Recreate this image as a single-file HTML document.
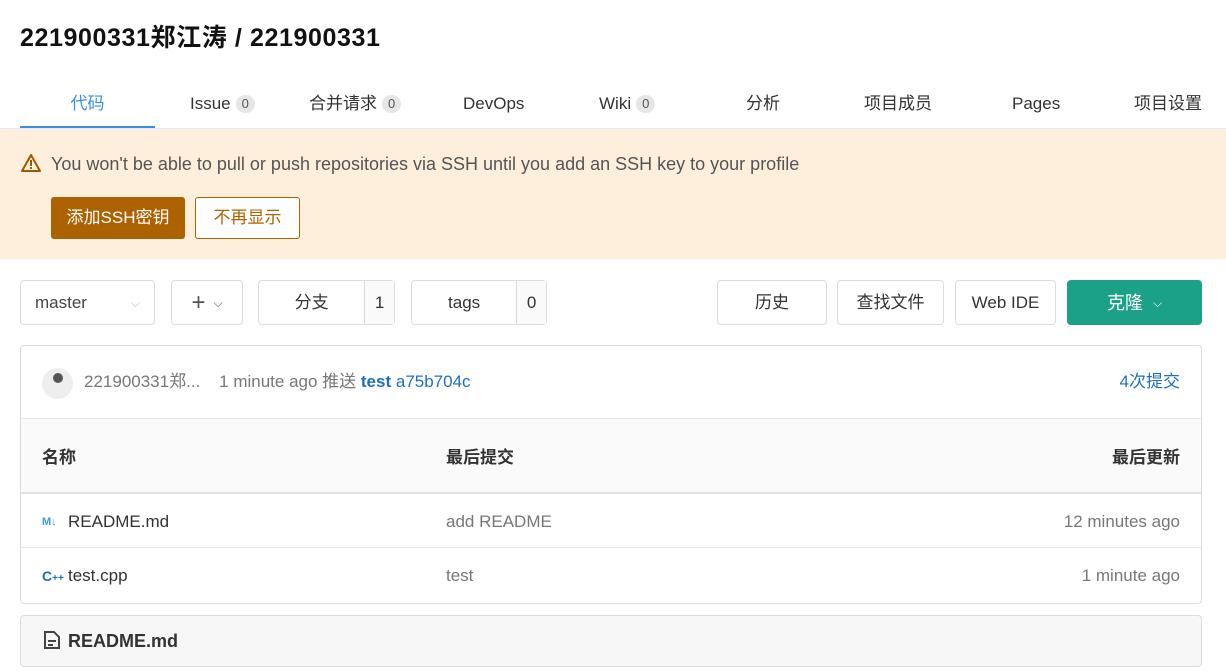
<!DOCTYPE html>
<html><head><meta charset="utf-8"><style>
*{box-sizing:border-box;margin:0;padding:0}
body{width:1226px;height:672px;overflow:hidden;background:#fff;font-family:"Liberation Sans","Noto Sans CJK SC",sans-serif;color:#333;font-size:16px;position:relative}
.a{position:absolute}
.t{white-space:nowrap;line-height:22px;height:22px}
.btn{position:absolute;border:1px solid #dcdcdc;border-radius:4px;background:#fff;display:flex;align-items:center;justify-content:center;font-size:17px;color:#333;line-height:22px}
.btn span{line-height:22px}
.badge{display:inline-block;background:#e6e6e6;border-radius:9px;font-size:13px;line-height:18px;padding:0 6px;color:#555;margin-left:5px;vertical-align:1px}
</style></head><body>
<div class="a t" style="left:20px;top:25px;font-size:25px;line-height:26px;height:26px;font-weight:bold;color:#111;letter-spacing:0.6px">221900331郑江涛 / 221900331</div>
<div class="a" style="left:0;top:76px;width:1226px;height:53px;border-bottom:1px solid #e6e6e6;box-shadow:0 2px 3px rgba(0,0,0,.06)"></div>
<div class="a t" style="left:20px;top:93px;width:135px;text-align:center;font-size:17px;color:#3a8ee6">代码</div>
<div class="a" style="left:20px;top:126px;width:135px;height:2px;background:#3a8ee6"></div>
<div class="a t" style="left:190px;top:93px;font-size:17px">Issue<span class="badge">0</span></div>
<div class="a t" style="left:309px;top:93px;font-size:17px">合并请求<span class="badge">0</span></div>
<div class="a t" style="left:463px;top:93px;font-size:17px">DevOps</div>
<div class="a t" style="left:599px;top:93px;font-size:17px">Wiki<span class="badge">0</span></div>
<div class="a t" style="left:746px;top:93px;font-size:17px">分析</div>
<div class="a t" style="left:864px;top:93px;font-size:17px">项目成员</div>
<div class="a t" style="left:1012px;top:93px;font-size:17px">Pages</div>
<div class="a t" style="left:1134px;top:93px;font-size:17px">项目设置</div>
<div class="a" style="left:0;top:130px;width:1226px;height:129px;background:#fdefdc"></div>
<svg class="a" style="left:20px;top:153px" width="22" height="20" viewBox="0 0 22 20"><path d="M11 2L20 18H2Z" fill="none" stroke="#9c5a00" stroke-width="2" stroke-linejoin="round"/><rect x="10" y="7" width="2" height="6" fill="#9c5a00"/><rect x="10" y="14" width="2" height="2" fill="#9c5a00"/></svg>
<div class="a t" style="left:51px;top:153px;font-size:18px;color:#555">You won't be able to pull or push repositories via SSH until you add an SSH key to your profile</div>
<div class="a" style="left:51px;top:197px;width:134px;height:42px;background:#ad6200;border-radius:3px;color:#fff;font-size:17px;display:flex;align-items:center;justify-content:center;line-height:22px">添加SSH密钥</div>
<div class="a" style="left:195px;top:197px;width:105px;height:42px;background:#fff;border:1px solid #ad6200;border-radius:3px;color:#ad6200;font-size:17px;display:flex;align-items:center;justify-content:center;line-height:22px">不再显示</div>
<div class="btn" style="left:20px;top:280px;width:135px;height:45px;justify-content:space-between;padding:0 14px;color:#444"><span>master</span><span style="color:#bbb;font-size:12px">⌵</span></div>
<div class="btn" style="left:171px;top:280px;width:72px;height:45px;font-size:24px;color:#555">+<span style="font-size:12px;margin-left:8px">⌵</span></div>
<div class="btn" style="left:258px;top:280px;width:137px;height:45px;justify-content:flex-start"><span style="width:106px;text-align:center">分支</span><span style="width:30px;height:43px;border-left:1px solid #dcdcdc;background:#fafafa;display:flex;align-items:center;justify-content:center">1</span></div>
<div class="btn" style="left:411px;top:280px;width:136px;height:45px;justify-content:flex-start"><span style="width:105px;text-align:center">tags</span><span style="width:30px;height:43px;border-left:1px solid #dcdcdc;background:#fafafa;display:flex;align-items:center;justify-content:center">0</span></div>
<div class="btn" style="left:717px;top:280px;width:110px;height:45px">历史</div>
<div class="btn" style="left:837px;top:280px;width:107px;height:45px">查找文件</div>
<div class="btn" style="left:955px;top:280px;width:101px;height:45px">Web IDE</div>
<div class="btn" style="left:1067px;top:280px;width:135px;height:45px;background:#1aa187;border-color:#1aa187;color:#fff;font-size:18px">克隆<span style="font-size:12px;margin-left:10px">⌵</span></div>
<div class="a" style="left:20px;top:345px;width:1182px;height:259px;border:1px solid #dcdcdc;border-radius:4px"></div>
<div class="a" style="left:42px;top:368px;width:31px;height:31px;border-radius:50%;background:#eee"></div>
<div class="a" style="left:53px;top:373px;width:10px;height:10px;border-radius:50%;background:#555"></div>
<div class="a t" style="left:84px;top:371px;font-size:17px;color:#777">221900331郑...&nbsp;&nbsp;&nbsp;&nbsp;1 minute ago 推送 <b style="color:#1f6fbf">test</b> <span style="color:#1f6fbf">a75b704c</span></div>
<div class="a t" style="right:46px;top:371px;font-size:17px;color:#1f6fbf">4次提交</div>
<div class="a" style="left:21px;top:418px;width:1180px;height:76px;background:#fafafa;border-top:1px solid #e6e6e6;border-bottom:2px solid #e0e0e0"></div>
<div class="a t" style="left:42px;top:447px;font-size:17px;font-weight:bold">名称</div>
<div class="a t" style="left:446px;top:447px;font-size:17px;font-weight:bold">最后提交</div>
<div class="a t" style="right:46px;top:447px;font-size:17px;font-weight:bold">最后更新</div>
<div class="a t" style="left:42px;top:511px;font-size:11px;font-weight:bold;color:#3a9be6">M↓</div>
<div class="a t" style="left:68px;top:511px;font-size:17px">README.md</div>
<div class="a t" style="left:446px;top:511px;font-size:17px;color:#777">add README</div>
<div class="a t" style="right:46px;top:511px;font-size:17px;color:#777">12 minutes ago</div>
<div class="a" style="left:21px;top:547px;width:1180px;height:1px;background:#e6e6e6"></div>
<div class="a t" style="left:42px;top:565px;font-size:14px;font-weight:bold;color:#1a6fb5">C<span style="font-size:10px">++</span></div>
<div class="a t" style="left:68px;top:565px;font-size:17px">test.cpp</div>
<div class="a t" style="left:446px;top:565px;font-size:17px;color:#777">test</div>
<div class="a t" style="right:46px;top:565px;font-size:17px;color:#777">1 minute ago</div>
<div class="a" style="left:20px;top:615px;width:1182px;height:52px;border:1px solid #dcdcdc;border-radius:4px;background:#f7f7f7"></div>
<svg class="a" style="left:44px;top:631px" width="16" height="18" viewBox="0 0 16 18"><path d="M1 1H10L15 6V17H1Z" fill="none" stroke="#444" stroke-width="2"/><rect x="4" y="9" width="8" height="2" fill="#444"/><rect x="4" y="13" width="5" height="2" fill="#444"/></svg>
<div class="a t" style="left:68px;top:630px;font-size:18px;font-weight:bold">README.md</div>
</body></html>
